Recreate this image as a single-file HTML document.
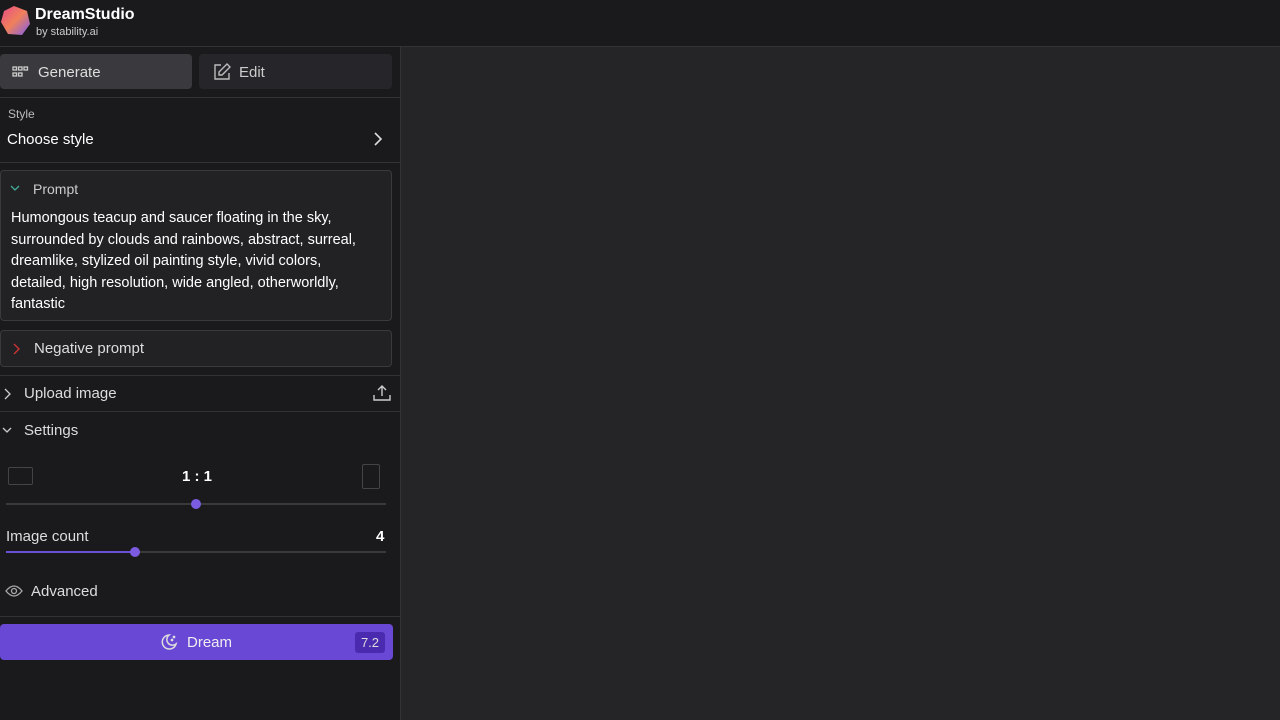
<!DOCTYPE html><html><head><style>
body{margin:0;width:1280px;height:720px;background:#252527;font-family:"Liberation Sans",sans-serif;color:#fff;position:relative;overflow:hidden}
.a{position:absolute}
.hdr{left:0;top:0;width:1280px;height:46px;background:#1a1a1c;border-bottom:1px solid #333}
.side{left:0;top:47px;width:400px;height:673px;background:#1a1a1c;border-right:1px solid #333}
.line{position:absolute;left:0;width:400px;height:1px;background:#333}
.t{position:absolute;white-space:nowrap}
</style></head><body>
<div class="a hdr">
<svg class="a" style="left:0;top:5px" width="32" height="32" viewBox="0 0 32 32"><defs><linearGradient id="g" x1="0" y1="0" x2="1" y2="1"><stop offset="0" stop-color="#e54b8a"/><stop offset=".5" stop-color="#f0805a"/><stop offset="1" stop-color="#7b5cf0"/></linearGradient></defs><polygon points="14,1 27,6 30,19 22,30 8,29 1,17 4,6" fill="url(#g)"/></svg>
<div class="t" style="left:35px;top:6px;font-size:16px;font-weight:bold">DreamStudio</div>
<div class="t" style="left:36px;top:26px;font-size:11px;color:#ccc">by stability.ai</div>
</div>
<div class="a side"></div>
<div class="a" style="left:0;top:54px;width:192px;height:35px;background:#3a3a3e;border-radius:4px"></div>
<div class="a" style="left:199px;top:54px;width:193px;height:35px;background:#26262a;border-radius:4px"></div>
<svg class="a" style="left:12px;top:66px" width="17" height="12"><g fill="none" stroke="#ccc" stroke-width="1.3"><rect x="1" y="1" width="3.5" height="3"/><rect x="6.5" y="1" width="3.5" height="3"/><rect x="12" y="1" width="3.5" height="3"/><rect x="1" y="7" width="3.5" height="3"/><rect x="6.5" y="7" width="3.5" height="3"/></g></svg>
<div class="t" style="left:38px;top:64px;font-size:15px;color:#ddd">Generate</div>
<svg class="a" style="left:213px;top:63px" width="18" height="18" viewBox="0 0 18 18" fill="none" stroke="#bbb" stroke-width="1.4"><path d="M8 2H2v14h14v-6"/><path d="M14 1l3 3-8 8H6V9z"/></svg>
<div class="t" style="left:239px;top:64px;font-size:15px;color:#ccc">Edit</div>
<div class="line" style="top:97px"></div>
<div class="t" style="left:8px;top:107px;font-size:12px;color:#bbb">Style</div>
<div class="t" style="left:7px;top:131px;font-size:15px">Choose style</div>
<svg class="a" style="left:373px;top:132px" width="10" height="14" viewBox="0 0 10 14" fill="none" stroke="#ddd" stroke-width="1.6"><path d="M2 1l6 6-6 6"/></svg>
<div class="line" style="top:162px"></div>
<div class="a" style="left:0;top:170px;width:392px;height:151px;background:#222225;border:1px solid #3a3a3e;border-radius:4px;box-sizing:border-box"></div>
<svg class="a" style="left:10px;top:185px" width="10" height="7" viewBox="0 0 10 7" fill="none" stroke="#4a9" stroke-width="1.3"><path d="M1 1l4 4 4-4"/></svg>
<div class="t" style="left:33px;top:181px;font-size:14px;color:#ccc">Prompt</div>
<div class="a" style="left:11px;top:208px;width:368px;font-size:14.5px;line-height:21.5px">Humongous teacup and saucer floating in the sky, surrounded by clouds and rainbows, abstract, surreal, dreamlike, stylized oil painting style, vivid colors, detailed, high resolution, wide angled, otherworldly, fantastic</div>
<div class="a" style="left:0;top:330px;width:392px;height:37px;background:#222225;border:1px solid #3a3a3e;border-radius:4px;box-sizing:border-box"></div>
<svg class="a" style="left:12px;top:343px" width="8" height="12" viewBox="0 0 8 12" fill="none" stroke="#c33" stroke-width="1.4"><path d="M2 1l5 5-5 5"/></svg>
<div class="t" style="left:34px;top:340px;font-size:15px;color:#ddd">Negative prompt</div>
<div class="line" style="top:375px"></div>
<svg class="a" style="left:3px;top:388px" width="8" height="12" viewBox="0 0 8 12" fill="none" stroke="#ccc" stroke-width="1.3"><path d="M2 1l5 5-5 5"/></svg>
<div class="t" style="left:24px;top:385px;font-size:15px;color:#ddd">Upload image</div>
<svg class="a" style="left:373px;top:384px" width="18" height="18" viewBox="0 0 18 18" fill="none" stroke="#ccc" stroke-width="1.4"><path d="M9 12V2M5 6l4-4 4 4M1 11v5h16v-5"/></svg>
<div class="line" style="top:411px"></div>
<svg class="a" style="left:2px;top:427px" width="10" height="7" viewBox="0 0 10 7" fill="none" stroke="#ccc" stroke-width="1.3"><path d="M1 1l4 4 4-4"/></svg>
<div class="t" style="left:24px;top:422px;font-size:15px;color:#ddd">Settings</div>
<div class="a" style="left:8px;top:467px;width:25px;height:18px;border:1px solid #444;box-sizing:border-box;border-radius:2px"></div>
<div class="a" style="left:362px;top:464px;width:18px;height:25px;border:1px solid #444;box-sizing:border-box;border-radius:2px"></div>
<div class="t" style="left:182px;top:468px;font-size:15px;font-weight:bold">1 : 1</div>
<div class="a" style="left:6px;top:503px;width:380px;height:2px;background:#3a3a3a"></div>
<div class="a" style="left:191px;top:499px;width:10px;height:10px;border-radius:50%;background:#7b5ce0"></div>
<div class="t" style="left:6px;top:528px;font-size:15px;color:#ddd">Image count</div>
<div class="t" style="left:376px;top:528px;font-size:15px;font-weight:bold">4</div>
<div class="a" style="left:6px;top:551px;width:380px;height:2px;background:#3a3a3a"></div>
<div class="a" style="left:6px;top:551px;width:128px;height:2px;background:#6a4fd8"></div>
<div class="a" style="left:130px;top:547px;width:10px;height:10px;border-radius:50%;background:#7b5ce0"></div>
<svg class="a" style="left:5px;top:584px" width="18" height="14" viewBox="0 0 18 14" fill="none" stroke="#aaa" stroke-width="1.3"><path d="M1 7q8-10 16 0q-8 10-16 0z"/><circle cx="9" cy="7" r="2.5"/></svg>
<div class="t" style="left:31px;top:583px;font-size:15px;color:#ddd">Advanced</div>
<div class="line" style="top:616px"></div>
<div class="a" style="left:0;top:624px;width:393px;height:36px;background:#6a48d6;border-radius:4px"></div>
<svg class="a" style="left:160px;top:633px" width="18" height="18" viewBox="0 0 18 18" fill="none" stroke="#ddd" stroke-width="1.5"><path d="M9 2a7 7 0 1 0 7 9 5.5 5.5 0 0 1-7-9z"/><circle cx="14" cy="4" r=".6" fill="#ddd"/><circle cx="12" cy="7" r=".6" fill="#ddd"/></svg>
<div class="t" style="left:187px;top:634px;font-size:15px;color:#eee">Dream</div>
<div class="a" style="left:355px;top:632px;width:30px;height:21px;background:#4a2bb0;border-radius:3px;font-size:13px;text-align:center;line-height:21px;color:#ddd">7.2</div>
</body></html>
